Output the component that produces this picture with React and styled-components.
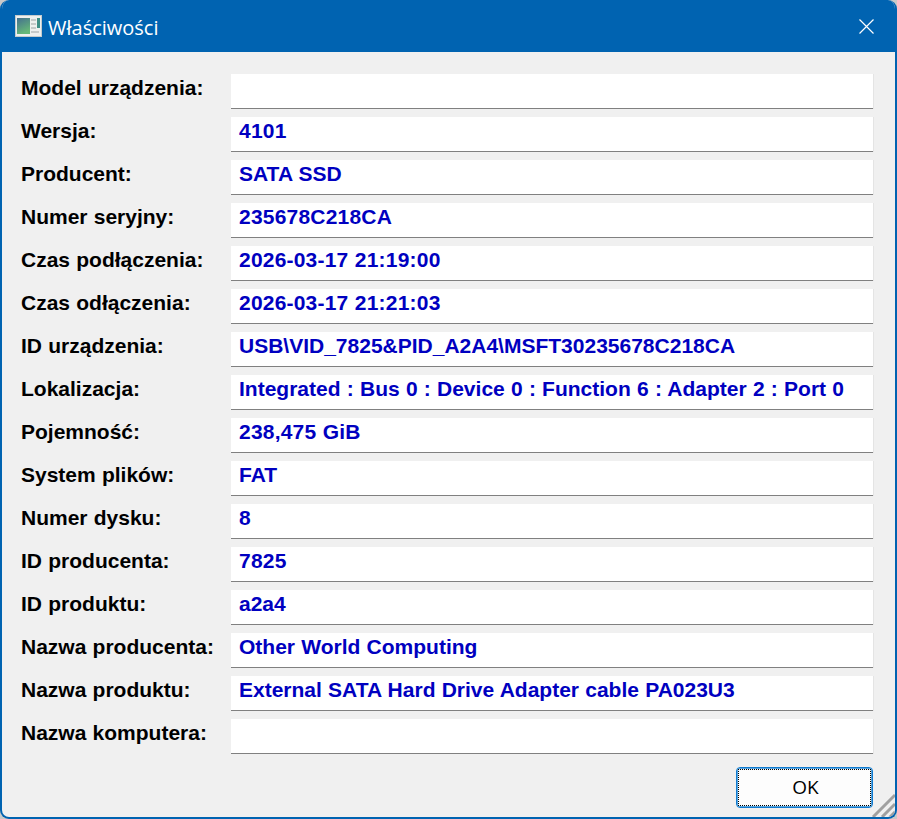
import React from 'react';
import styled, { createGlobalStyle } from 'styled-components';

const rows = [
  { label: 'Model urządzenia:', value: '' },
  { label: 'Wersja:', value: '4101', wide: true },
  { label: 'Producent:', value: 'SATA SSD' },
  { label: 'Numer seryjny:', value: '235678C218CA', wide: true },
  { label: 'Czas podłączenia:', value: '2026-03-17 21:19:00', wide: true },
  { label: 'Czas odłączenia:', value: '2026-03-17 21:21:03', wide: true },
  { label: 'ID urządzenia:', value: 'USB\\VID_7825&PID_A2A4\\MSFT30235678C218CA' },
  { label: 'Lokalizacja:', value: 'Integrated : Bus 0 : Device 0 : Function 6 : Adapter 2 : Port 0' },
  { label: 'Pojemność:', value: '238,475 GiB', wide: true },
  { label: 'System plików:', value: 'FAT' },
  { label: 'Numer dysku:', value: '8' },
  { label: 'ID producenta:', value: '7825', wide: true },
  { label: 'ID produktu:', value: 'a2a4' },
  { label: 'Nazwa producenta:', value: 'Other World Computing' },
  { label: 'Nazwa produktu:', value: 'External SATA Hard Drive Adapter cable PA023U3' },
  { label: 'Nazwa komputera:', value: '' },
];

const GlobalStyle = createGlobalStyle`
  html, body {
    margin: 0;
    padding: 0;
    background: #c9c9c9;
  }
`;

const Dialog = styled.div`
  width: 897px;
  height: 819px;
  box-sizing: border-box;
  display: flex;
  flex-direction: column;
  position: relative;
  overflow: hidden;
  background: #f0f0f0;
  border: 2px solid #0063b1;
  border-top: none;
  border-radius: 9px;
  font-family: "Liberation Sans", Arial, sans-serif;
`;

const TitleBar = styled.header`
  height: 52px;
  flex: none;
  margin: 0 -2px;
  padding: 0 23px 0 15px;
  display: flex;
  align-items: center;
  background: #0063b1;
  color: #fff;
`;

const Title = styled.h1`
  margin: 2px 0 0 6px;
  font-family: "Open Sans", "Noto Sans", sans-serif;
  font-size: 20px;
  font-weight: 400;
  flex: 1;
`;

const Form = styled.div`
  display: flex;
  flex-direction: column;
  gap: 8px;
  padding: 22px 22px 0 19px;
`;

const Row = styled.div`
  display: flex;
  height: 35px;
`;

const Label = styled.div`
  width: 210px;
  flex: none;
  padding-top: 2px;
  font-size: 21px;
  line-height: 23px;
  font-weight: 700;
  word-spacing: 0.4px;
  color: #000;
  white-space: nowrap;
`;

const Value = styled.div`
  flex: 1;
  box-sizing: border-box;
  padding: 2px 0 0 8px;
  font-size: 21px;
  line-height: 23px;
  font-weight: 700;
  word-spacing: 0.4px;
  letter-spacing: ${p => (p.$wide ? '0.2px' : '0')};
  color: #0000c0;
  background: #fff;
  border-bottom: 1px solid #808080;
  box-shadow: 1px 0 0 #e4e4e4;
  white-space: nowrap;
`;

const Footer = styled.div`
  display: flex;
  justify-content: flex-end;
  padding: 13px 22px 0 0;
`;

const OkButton = styled.button`
  position: relative;
  width: 137px;
  height: 41px;
  padding: 0 0 2px 2px;
  background: #fdfdfd;
  border: 1px solid #0f7bd0;
  border-radius: 4px;
  box-shadow: inset 0 0 0 1px #5aa5de;
  font-family: "Open Sans", "Noto Sans", sans-serif;
  font-size: 19px;
  color: #000;

  &::after {
    content: '';
    position: absolute;
    inset: 1px;
    border: 1px dotted #000;
  }
`;

const Grip = styled.svg`
  position: absolute;
  right: 0;
  bottom: 0;
`;

const CloseIcon = () => (
  <svg width="15" height="15" viewBox="0 0 15 15" fill="none" stroke="#fff" strokeWidth="1.2">
    <path d="M0.5 0.5 L14.5 14.5 M14.5 0.5 L0.5 14.5" />
  </svg>
);

const WindowIcon = () => (
  <svg width="27" height="22" viewBox="0 0 27 22">
    <defs>
      <linearGradient id="pane" x1="0" y1="0" x2="0.4" y2="1">
        <stop offset="0" stopColor="#44708f" />
        <stop offset="1" stopColor="#66b878" />
      </linearGradient>
    </defs>
    <rect x="0" y="0" width="27" height="22" fill="#c4cbcd" />
    <rect x="1" y="1" width="25" height="20" fill="#eef0ef" />
    <rect x="2" y="3" width="13" height="16" fill="url(#pane)" />
    <rect x="22" y="3" width="3" height="10" fill="#3f8f86" />
    <path d="M16 5h5M16 9h5M16 13h5M16 17h8" stroke="#c6caca" strokeWidth="2" />
  </svg>
);

const App = () => (
  <>
    <GlobalStyle />
    <Dialog>
      <TitleBar>
        <WindowIcon />
        <Title>Właściwości</Title>
        <CloseIcon />
      </TitleBar>
      <Form>
        {rows.map(({ label, value, wide }) => (
          <Row key={label}>
            <Label>{label}</Label>
            <Value $wide={wide}>{value}</Value>
          </Row>
        ))}
      </Form>
      <Footer>
        <OkButton>OK</OkButton>
      </Footer>
      <Grip width="24" height="24" viewBox="0 0 24 24" stroke="#a0a0a0" strokeWidth="3">
        <path d="M24 2 L2 24 M24 11 L11 24 M24 19 L19 24" />
      </Grip>
    </Dialog>
  </>
);

export default App;
